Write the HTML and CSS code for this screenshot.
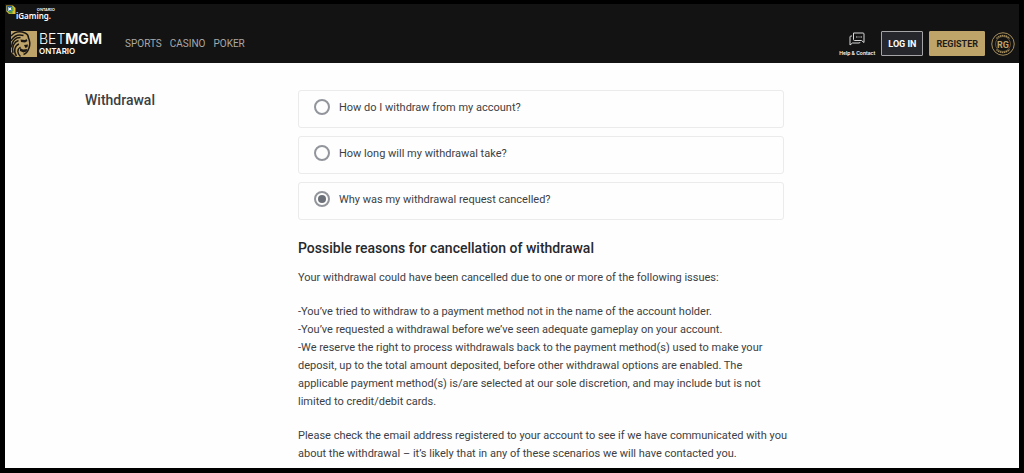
FILE: index.html
```html
<!DOCTYPE html>
<html lang="en">
<head>
    <meta charset="UTF-8">
    <meta name="viewport" content="width=device-width, initial-scale=1.0">
    <title>Withdrawal - BetMGM Ontario</title>
    <link rel="stylesheet" href="styles.css">
</head>
<body>
    <header>
        <a class="igaming" href="#">
            <svg width="10" height="10" viewBox="0 0 20 20">
                <path d="M0 1h14l5 5v12H6l-6-6z" fill="#e3b92f"/>
                <path d="M1 2h11v10H1z" fill="#2160a8"/>
                <path d="M12 2l3 4v6h-3z" fill="#55a64b"/>
                <path d="M3 12h10v5H7z" fill="#4f9c48"/>
                <path d="M4 4l3 2 4-2-1 4 2 3-4-1-4 2 1-4z" fill="#fff"/>
            </svg>
            <span class="igaming-text">
                <span class="igaming-region">ONTARIO</span>
                <span class="igaming-name">iGaming.</span>
            </span>
        </a>
        <div class="bar">
            <a class="brand" href="#">
                <svg width="26" height="26" viewBox="0 0 52 52">
                    <rect width="52" height="52" fill="#bfa46a"/>
                    <g fill="none" stroke="#1b1814" stroke-width="3">
                        <path d="M0 10C7 2 18 0 28 4c5 2 7 6 7 11"/>
                        <path d="M0 20C6 9 15 6 25 9"/>
                        <path d="M1 33C2 20 9 13 19 13"/>
                        <path d="M4 44C1 32 6 22 15 19"/>
                        <path d="M11 50C4 40 8 29 16 26"/>
                        <path d="M19 51C11 44 13 36 19 32"/>
                        <path d="M35 14c3 6 3 14 1 20s-5 11-11 13"/>
                    </g>
                    <path d="M19 17l9 1 3-2 2 4-5 3-8-1z" fill="#1b1814"/>
                    <path d="M26 28l8-1-1 5-4 2z" fill="#1b1814"/>
                    <path d="M18 34l6 3 9-1-2 5-6 2-7-3z" fill="#1b1814"/>
                    <path d="M0 42l10 10H0z" fill="#1b1814"/>
                </svg>
                <span class="brand-text">
                    <span class="brand-name">BET<b>MGM</b></span>
                    <span class="brand-region">ONTARIO</span>
                </span>
            </a>
            <nav>
                <a href="#">SPORTS</a>
                <a href="#">CASINO</a>
                <a href="#">POKER</a>
            </nav>
            <div class="account">
                <a class="help" href="#">
                    <svg width="16" height="14" viewBox="0 0 32 28" fill="none" stroke="#d8d8d8" stroke-width="2">
                        <path d="M9 2h19q2 0 2 2v17l-5-4H11q-2 0-2-2V2z"/>
                        <path d="M6 8H4q-2 0-2 2v16l5-4h13q2 0 2-2"/>
                        <path d="M14 10h3m2 0h2m2 0h3"/>
                    </svg>
                    <span>Help &amp; Contact</span>
                </a>
                <button class="login" type="button">LOG IN</button>
                <button class="register" type="button">REGISTER</button>
                <a class="rg" href="#" aria-label="Responsible gaming">
                    <svg width="24" height="24" viewBox="0 0 48 48" fill="none" stroke="#a68e5c">
                        <circle cx="24" cy="24" r="22.5" stroke-width="2"/>
                        <path d="M11 13a17.500 17.500 0 0 1 26 0M11 35a17.500 17.500 0 0 0 26 0" stroke-width="3" stroke-dasharray="3 1"/>
                        <circle cx="24" cy="24" r="15" stroke-width="1"/>
                        <text x="24" y="31" text-anchor="middle" stroke="none" fill="#bfa46a">RG</text>
                    </svg>
                </a>
            </div>
        </div>
    </header>

    <main>
        <h1>Withdrawal</h1>
        <section>
            <div class="questions">
                <label><input type="radio" name="question">How do I withdraw from my account?</label>
                <label><input type="radio" name="question">How long will my withdrawal take?</label>
                <label><input type="radio" name="question" checked>Why was my withdrawal request cancelled?</label>
            </div>
            <div class="answer">
                <h2>Possible reasons for cancellation of withdrawal</h2>
                <p>Your withdrawal could have been cancelled due to one or more of the following issues:</p>
                <p>
                    -You’ve tried to withdraw to a payment method not in the name of the account holder.<br>
                    -You’ve requested a withdrawal before we’ve seen adequate gameplay on your account.<br>
                    -We reserve the right to process withdrawals back to the payment method(s) used to make your deposit, up to the total amount deposited, before other withdrawal options are enabled. The applicable payment method(s) is/are selected at our sole discretion, and may include but is not limited to credit/debit cards.
                </p>
                <p>Please check the email address registered to your account to see if we have communicated with you about the withdrawal – it’s likely that in any of these scenarios we will have contacted you.</p>
            </div>
        </section>
    </main>
</body>
</html>
```
FILE: styles.css
```css
* {
    box-sizing: border-box;
}

body {
    margin: 0;
    min-height: 100vh;
    border: 5px solid #000;
    border-top-width: 4px;
    background: #fefefe;
    color: #3c3f44;
    font-family: Roboto, sans-serif;
    font-size: 11px;
}

a {
    color: inherit;
    text-decoration: none;
}

header {
    height: 59px;
    background: #131313;
    color: #fff;
}

.igaming {
    display: flex;
    align-items: flex-start;
    width: 50px;
    height: 20px;
    padding: 1px 1px 0;
    font-family: "Noto Sans", sans-serif;
    font-weight: 600;
}

.igaming-text {
    display: flex;
    flex-direction: column;
    padding-top: 3px;
}

.igaming-region {
    align-self: flex-end;
    margin-right: -4px;
    font-size: 4px;
    line-height: 4px;
}

.igaming-name {
    font-size: 8px;
    line-height: 8px;
}

.bar {
    display: flex;
    align-items: center;
    height: 39px;
    padding: 0 4px 0 6px;
}

.brand {
    display: flex;
    align-items: center;
    gap: 2px;
    width: 114px;
}

.brand-text {
    display: flex;
    flex-direction: column;
    font-family: Inter, sans-serif;
}

.brand-name {
    font-size: 14px;
    font-weight: 300;
    line-height: 14px;
}

.brand-name b {
    font-weight: 700;
}

.brand-region {
    font-size: 8px;
    font-weight: 600;
    line-height: 10px;
}

nav {
    display: flex;
    gap: 8px;
    color: #a9a9a9;
    font-size: 10px;
}

.account {
    display: flex;
    align-items: center;
    gap: 6px;
    margin-left: auto;
}

.help {
    display: flex;
    flex-direction: column;
    align-items: center;
    gap: 4px;
    font-family: Inter, sans-serif;
    font-size: 5px;
    font-weight: 600;
    line-height: 6px;
}

button {
    height: 25px;
    padding: 0 6px;
    border: 1px solid #bfa46a;
    border-radius: 1px;
    background: #bfa46a;
    color: #1e1c18;
    font-family: inherit;
    font-size: 9px;
    font-weight: 700;
}

.login {
    border-color: #a5a5a7;
    background: #26272c;
    color: #fff;
}

.rg svg {
    display: block;
}

.rg text {
    font-size: 18px;
    font-weight: 700;
}

main {
    display: grid;
    grid-template-columns: 213px minmax(0, 494px);
    padding: 27px 80px 0;
}

h1 {
    margin: 0;
    font-size: 14px;
    font-weight: 500;
    line-height: 20px;
}

h2 {
    margin: 0 0 11px;
    color: #26292e;
    font-size: 14px;
    font-weight: 500;
    line-height: 20px;
}

.questions {
    display: grid;
    gap: 8px;
    max-width: 486px;
}

.questions label {
    display: flex;
    align-items: center;
    gap: 9px;
    height: 38px;
    padding: 0 15px 4px;
    border: 1px solid #ebebeb;
    border-radius: 3px;
}

.questions input {
    appearance: none;
    width: 16px;
    height: 16px;
    margin: 0;
    border: 2px solid #92969c;
    border-radius: 50%;
}

.questions input:checked {
    padding: 2px;
    background: #6c7078 content-box;
}

.answer {
    padding-top: 18px;
    line-height: 18px;
}

.answer p {
    margin: 0 0 16px;
}

.answer p:last-child {
    margin-bottom: 0;
}
```
